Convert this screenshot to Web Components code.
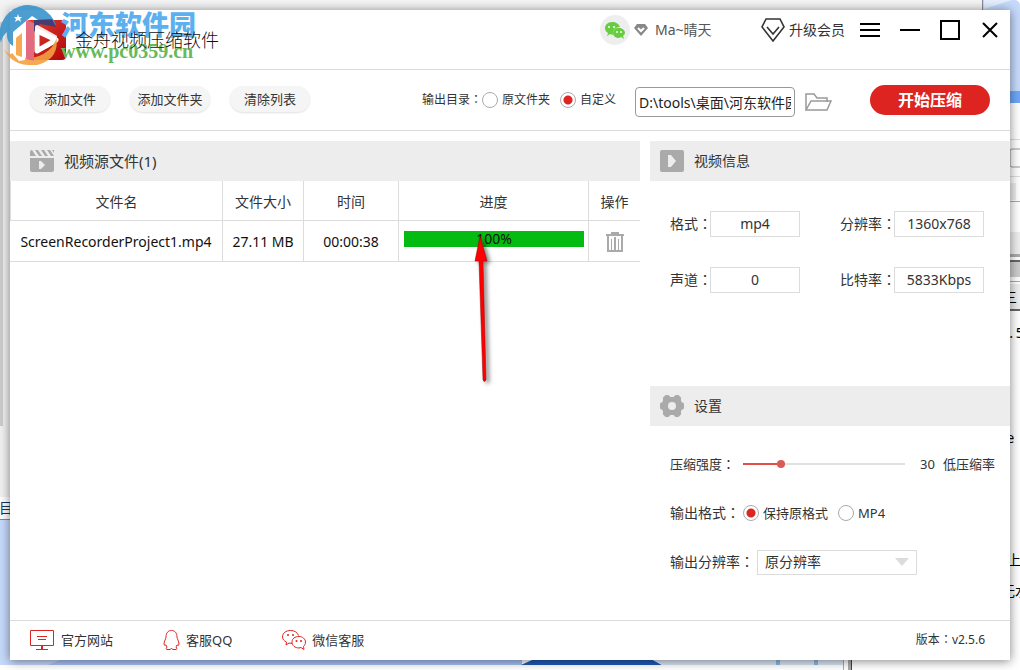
<!DOCTYPE html>
<html lang="zh-CN">
<head>
<meta charset="utf-8">
<meta name="viewport" content="width=device-width, initial-scale=1">
<title>金舟视频压缩软件</title>
<style>
  html {
    --line: #dcdcdc;
    --panel: #ededed;
    --text: #333;
    --red: #de2420;
    --icon: #aaa;
  }

  body {
    margin: 0;
    box-sizing: border-box;
    min-height: 100vh;
    padding: 10px;
    display: flex;
    position: relative;
    overflow: hidden;
    background: #fff;
    color: var(--text);
    font: 14px/20px "Noto Sans", "Noto Sans CJK SC", sans-serif;
  }
</style>
</head>
<body>
<desktop-backdrop></desktop-backdrop>
<app-window>
  <title-bar slot="title">金舟视频压缩软件</title-bar>
  <tool-bar slot="tools"></tool-bar>
  <file-list slot="main"></file-list>
  <video-info slot="side"></video-info>
  <compress-settings slot="side"></compress-settings>
  <app-footer slot="footer"></app-footer>
</app-window>

<script>
// clones the markup into an open shadow root
function define(name, html) {
  const template = document.createElement('template');
  template.innerHTML = html;

  window.customElements.define(name, class extends HTMLElement {
    constructor() {
      super();
      this.attachShadow({ mode: 'open' });
      this.shadowRoot.appendChild(template.content.cloneNode(true));
    }
  });
}

const controls = `
  * { box-sizing: border-box; }
  button, input, select { font: inherit; color: inherit; margin: 0; }
  button { padding: 0; border: 0; background: none; cursor: pointer; }
  svg { display: block; flex: none; }
  .colon {
    display: inline-block;
    width: 12px;
    line-height: 1;
    text-align: center;
    font-family: "Noto Sans CJK TC", sans-serif;
  }
`;

const radios = `
  .radio { display: flex; align-items: center; gap: 4px; white-space: nowrap; }
  .radio input {
    appearance: none;
    width: 16px;
    height: 16px;
    border: 1px solid #aaa;
    border-radius: 50%;
    background: #fff;
  }
  .radio input:checked {
    background: radial-gradient(circle, var(--red) 0 4px, #fff 5px);
  }
`;

// other windows that show round the edges
define('desktop-backdrop', `
  <style>
    :host { position: absolute; inset: 0; }
    svg { display: block; width: 100%; height: 100%; }
    text { font: 14px "Noto Sans Mono", "Noto Sans CJK SC", sans-serif; fill: #000; }
  </style>
  <svg viewBox="0 0 1020 670" preserveAspectRatio="none" aria-hidden="true">
    <path fill="#f4f4f4" d="M0 0h983v10H0z"/>
    <path fill="#f1f1f1" d="M0 5h10v492H0z"/>
    <path fill="#ccc" d="M0 22h3v404H0z"/>
    <path fill="#c6dafc" d="M0 520h10v145H0z"/>
    <path fill="#888" d="M0 519h10v1H0z"/>
    <text x="-1" y="513" style="fill:#14345c">目</text>
    <path fill="#a8c4f8" d="M0 660h522v5H0z"/>
    <path fill="#c6dafc" d="M0 660h60l-12 5H0z"/>
    <path fill="#205bb8" d="M532 660h121l9 5H521z"/>
    <path fill="#dce8f7" d="M653 660h190v5H662z"/>
    <path fill="#90b8e4" d="M776 660h4v5h-4zM814 660h4v5h-4z"/>
    <path fill="#aaa" d="M843 660h1v10h-1zM848 660h3v10h-3z"/>
    <path fill="#444" d="M851 660h1v10h-1z"/>
    <path fill="#c6dafc" d="M983 0h31q6 0 6 6v85h-37z"/>
    <path fill="#e4eeff" d="M984 0h28l-28 9z"/>
    <path fill="#889" d="M982 0h1v10h-1z"/>
    <path fill="#6ea7f9" d="M1010 91h10v12h-10z"/>
    <path fill="#ddd" d="M1010 139h10v1h-10zM1010 176h10v1h-10zM1010 252h10v1h-10z"/>
    <rect x="1010" y="149" width="20" height="18" rx="2" fill="#fff" stroke="#999"/>
    <path fill="#eee" d="M1010 183h6v17h-6zM1010 232h10v22h-10zM1010 284h10v25h-10z"/>
    <path fill="#aaa" d="M1010 201h10v1h-10zM1010 254h10v3h-10zM1010 281h10v1h-10z"/>
    <path fill="#666" d="M1010 260h10v2h-10zM1010 309h10v2h-10z"/>
    <path fill="#ccc" d="M1010 262h10v15h-10z"/>
    <text x="1003" y="302">三</text>
    <text x="1007" y="338">.5</text>
    <text x="1006" y="443">e</text>
    <text x="1007" y="565">上</text>
    <text x="1001" y="596">无水</text>
  </svg>
`);

define('app-window', `
  <style>
    :host {
      position: relative;
      flex: 1;
      min-width: 0;
      display: flex;
      flex-direction: column;
      background: #fff;
      box-shadow: 0 1px 10px rgba(0, 0, 0, 0.5);
    }
    .content {
      flex: 1;
      display: grid;
      grid-template-columns: minmax(0, 1fr) 360px;
      gap: 10px;
      padding-top: 10px;
    }
    .side { display: flex; flex-direction: column; }
  </style>
  <slot name="title"></slot>
  <slot name="tools"></slot>
  <div class="content">
    <slot name="main"></slot>
    <div class="side"><slot name="side"></slot></div>
  </div>
  <slot name="footer"></slot>
`);

define('site-watermark', `
  <style>
    :host { position: absolute; left: -10px; top: -5px; display: flex; pointer-events: none; }
    svg { flex: none; opacity: 0.9; }
    p { margin: 0; white-space: nowrap; }
    .name { font: 900 27px/30px "Noto Sans CJK SC", sans-serif; color: #5cb0ee; margin-top: 4px; }
    .url { font: bold 20px/22px "Liberation Serif", serif; color: #68b95a; margin-top: 1px; }
  </style>
  <svg width="61" height="60" viewBox="0 0 61 60" aria-hidden="true">
    <path fill="#3a94cc" d="M1 38A28 28 0 0 1 56 20L43 18 32 11 13 27v14q-7-4-6-14Q2 31 1 38z"/>
    <path fill="#f5a040" d="M4 44q5 7 9 4V32l7-6v26q16 4 29-7 7-6 7-16 5 25-19 31Q12 62 4 44z"/>
    <path fill="#fff" d="M13 49V29L25 18v37l-6 1z"/>
    <path fill="#f5a040" d="M16 50V33l6-5v24z"/>
    <path fill="#33417c" d="M34 15l18-1 4 8-16-3-6 8z"/>
    <path fill="#e5738a" d="M26 15l8 3v38l-8-2z"/>
    <path fill="none" stroke="#fff" stroke-width="4" stroke-linejoin="round" d="M37 22l18 10q-2 8-18 13z"/>
    <path fill="#fff" d="M18 9l1 3h3l-2 2 1 3-3-2-3 2 1-3-2-2h3z"/>
  </svg>
  <div>
    <p class="name">河东软件园</p>
    <p class="url">www.pc0359.cn</p>
  </div>
`);

define('title-bar', `
  <style>
    ${controls}
    :host {
      position: relative;
      display: flex;
      justify-content: space-between;
      height: 60px;
      box-sizing: border-box;
      padding: 0 10px 0 16px;
      border-bottom: 1px solid var(--line);
    }
    .brand, .right, .user, .vip { display: flex; align-items: center; }
    .brand { gap: 9px; }
    h1 { position: relative; z-index: 1; margin: 0; font-size: 18px; line-height: 24px; font-weight: 300; color: #111; }
    .right { height: 40px; }
    .user { gap: 4px; margin-right: 46px; color: #555; }
    .user span { padding-left: 3px; min-width: 63px; }
    .vip { gap: 4px; margin-right: 15px; }
    .window { display: flex; gap: 20px; color: #000; }
  </style>
  <div class="brand">
    <svg width="40" height="40" viewBox="0 0 40 40" aria-hidden="true">
      <defs><linearGradient id="g" x2="1" y2="1"><stop stop-color="#e43c34"/><stop offset="1" stop-color="#b00808"/></linearGradient></defs>
      <rect width="40" height="40" rx="4" fill="url(#g)"/>
      <path fill="none" stroke="#fff" stroke-width="5" stroke-linejoin="round" d="M11 11l19 9-19 11z"/>
    </svg>
    <h1><slot></slot></h1>
  </div>
  <div class="right">
    <div class="user">
      <svg width="30" height="30" viewBox="0 0 30 30" aria-hidden="true">
        <circle cx="15" cy="15" r="15" fill="#eee"/>
        <path fill="#66cc40" d="M12 7c-4 0-7 3-7 6 0 2 1 4 3 5l-1 3 3-2 3 1c-1-5 3-8 7-8-1-3-4-5-8-5z"/>
        <path fill="#66cc40" d="M19 13c-4 0-6 2-6 5s3 5 6 5l2-1 3 2-1-3c1-1 2-2 2-3 0-3-3-5-6-5z"/>
        <g fill="#fff"><circle cx="9" cy="12" r="1"/><circle cx="14" cy="12" r="1"/><circle cx="17" cy="17" r="1"/><circle cx="21" cy="17" r="1"/></g>
      </svg>
      <svg width="14" height="12" viewBox="0 0 14 12" aria-hidden="true">
        <path fill="#888" d="M3 0h8l3 4-7 8-7-8z"/>
        <path fill="none" stroke="#fff" stroke-width="2" d="M4 4l3 3 3-3"/>
      </svg>
      <span>Ma~晴天</span>
    </div>
    <button class="vip">
      <svg width="24" height="24" viewBox="0 0 24 24" fill="none" stroke="#333" stroke-width="1.6" aria-hidden="true">
        <path d="M5 1h14l4 8-11 14L1 9z"/><path d="M6 9l6 7 6-7"/>
      </svg>
      升级会员
    </button>
    <div class="window">
      <button aria-label="菜单"><svg width="20" height="20" viewBox="0 0 20 20"><path d="M0 3h20v2H0zM0 9h20v2H0zM0 15h20v2H0z"/></svg></button>
      <button aria-label="最小化"><svg width="20" height="20" viewBox="0 0 20 20"><path d="M0 9h20v2H0z"/></svg></button>
      <button aria-label="最大化"><svg width="20" height="20" viewBox="0 0 20 20"><path fill="none" stroke="#000" stroke-width="2" d="M1 1h18v18H1z"/></svg></button>
      <button aria-label="关闭"><svg width="20" height="20" viewBox="0 0 20 20"><path stroke="#000" stroke-width="2" d="M3 3l14 14M17 3L3 17"/></svg></button>
    </div>
  </div>
  <site-watermark></site-watermark>
`);

define('tool-bar', `
  <style>
    ${controls}
    ${radios}
    :host {
      display: flex;
      align-items: center;
      justify-content: space-between;
      height: 61px;
      box-sizing: border-box;
      padding: 0 20px;
      border-bottom: 1px solid var(--line);
      font-size: 12px;
    }
    .files { display: flex; gap: 20px; padding-bottom: 2px; }
    .files button {
      width: 80px;
      height: 26px;
      border-radius: 13px;
      background: #f5f5f5;
      box-shadow: 0 1px 2px rgba(0, 0, 0, 0.12);
      font-size: 13px;
    }
    .output { display: flex; align-items: center; }
    .radio { margin-right: 10px; }
    .path, .open { margin-top: 4px; }
    .path {
      width: 160px;
      height: 30px;
      margin-left: 9px;
      margin-right: 10px;
      padding: 0 3px;
      border: 1px solid #999;
      border-radius: 4px;
      background: #fff;
      color: #222;
      font-size: 14px;
    }
    .start {
      width: 120px;
      height: 30px;
      margin-left: 38px;
      border-radius: 15px;
      background: var(--red);
      color: #fff;
      font-size: 16px;
      font-weight: bold;
    }
  </style>
  <div class="files">
    <button>添加文件</button>
    <button>添加文件夹</button>
    <button>清除列表</button>
  </div>
  <div class="output" role="radiogroup" aria-label="输出目录">
    <span>输出目录<span class="colon">：</span></span>
    <label class="radio"><input type="radio" name="dir">原文件夹</label>
    <label class="radio"><input type="radio" name="dir" checked>自定义</label>
    <input class="path" type="text" aria-label="输出路径" value="D:\\tools\\桌面\\河东软件园">
    <button class="open" aria-label="打开文件夹">
      <svg width="27" height="20" viewBox="0 0 27 20" fill="none" stroke="#999" stroke-width="1.5">
        <path d="M1 18V2h8l3 4h10v4M1 18L6 9h20l-4 9z"/>
      </svg>
    </button>
    <button class="start">开始压缩</button>
  </div>
`);

define('panel-header', `
  <style>
    :host {
      display: flex;
      align-items: center;
      gap: 10px;
      height: 40px;
      box-sizing: border-box;
      padding: 0 10px;
      background: var(--panel);
    }
    h2 { margin: 0; font-size: inherit; font-weight: normal; }
  </style>
  <slot name="icon"></slot>
  <h2><slot></slot></h2>
`);

// red arrow that points at the finished bar
define('pointer-arrow', `
  <style>
    :host { position: absolute; left: 50%; top: 5px; margin-left: -24px; pointer-events: none; z-index: 1; }
    svg { display: block; filter: drop-shadow(3px 2px 2px rgba(0, 0, 0, 0.5)); }
  </style>
  <svg width="30" height="154" viewBox="0 0 30 154" aria-hidden="true">
    <path fill="#f00" stroke="#900" stroke-width="0.5" d="M10 0l7 25h-4l3 119q-2 3-3 0L9 25H5z"/>
  </svg>
`);

define('file-list', `
  <style>
    ${controls}
    :host { display: block; }
    panel-header { padding-left: 20px; font-size: 15px; }
    table { width: 100%; table-layout: fixed; border-collapse: separate; border-spacing: 0; }
    th, td {
      height: 40px;
      padding: 2px 0 0;
      border-right: 1px solid var(--line);
      border-bottom: 1px solid var(--line);
      text-align: center;
      font-weight: normal;
      white-space: nowrap;
    }
    td { color: #111; height: 41px; }
    th:first-child { border-left: 1px solid var(--line); }
    th:last-child, td:last-child { border-right: 0; }
    .size { width: 81px; }
    .time { width: 95px; }
    .progress { width: 190px; }
    .action { width: 51px; }
    td.progress { padding: 10px 4px 14px 5px; vertical-align: top; }
    .bar {
      position: relative;
      height: 16px;
      background: #04bb12;
      font-size: 14px;
      line-height: 16px;
    }
    td button { display: block; margin: 0 auto; }
  </style>
  <panel-header>
    <svg slot="icon" width="24" height="22" viewBox="0 0 24 22" fill="#aaa" aria-hidden="true">
      <path d="M0 2q0-2 2-2l4 6H0zM5 0h3l4 6H9zM11 0h3l4 6h-3zM17 0h3l4 6h-3zM22 0h2v3z"/>
      <path fill-rule="evenodd" d="M0 8h24v12q0 2-2 2H2q-2 0-2-2zM9 11v8h2l4-4-4-4z"/>
    </svg>
    视频源文件(1)
  </panel-header>
  <table>
    <thead>
      <tr>
        <th>文件名</th>
        <th class="size">文件大小</th>
        <th class="time">时间</th>
        <th class="progress">进度</th>
        <th class="action">操作</th>
      </tr>
    </thead>
    <tbody>
      <tr>
        <td>ScreenRecorderProject1.mp4</td>
        <td>27.11 MB</td>
        <td>00:00:38</td>
        <td class="progress"><div class="bar" role="progressbar" aria-valuenow="100">100%<pointer-arrow></pointer-arrow></div></td>
        <td>
          <button aria-label="删除">
            <svg width="18" height="20" viewBox="0 0 18 20" fill="#aaa">
              <path d="M5 0h8v2h5v2H0V2h5zM1 4h2v14h12V4h2v16H1z"/>
              <path d="M5 7h1v11H5zM8 5h2v13H8zM12 7h1v11h-1z"/>
            </svg>
          </button>
        </td>
      </tr>
    </tbody>
  </table>
`);

define('video-info', `
  <style>
    ${controls}
    :host { display: block; min-height: 245px; }
    dl {
      display: grid;
      grid-template-columns: 130px 144px;
      gap: 30px 40px;
      margin: 0;
      padding: 30px 20px;
    }
    dl div { display: flex; align-items: center; justify-content: space-between; }
    dt { white-space: nowrap; }
    dd {
      width: 90px;
      margin: 0;
      border: 1px solid var(--line);
      line-height: 24px;
      text-align: center;
    }
  </style>
  <panel-header>
    <svg slot="icon" width="24" height="22" viewBox="0 0 24 22" fill="#aaa" aria-hidden="true">
      <path fill-rule="evenodd" d="M2 0h20q2 0 2 2v18q0 2-2 2H2q-2 0-2-2V2q0-2 2-2zM8 5v12h3l5-6-5-6z"/>
    </svg>
    视频信息
  </panel-header>
  <dl>
    <div><dt>格式<span class="colon">：</span></dt><dd>mp4</dd></div>
    <div><dt>分辨率<span class="colon">：</span></dt><dd>1360x768</dd></div>
    <div><dt>声道<span class="colon">：</span></dt><dd>0</dd></div>
    <div><dt>比特率<span class="colon">：</span></dt><dd>5833Kbps</dd></div>
  </dl>
`);

define('compress-settings', `
  <style>
    ${controls}
    ${radios}
    :host { display: block; }
    .rows { display: grid; gap: 23px; padding: 25px 15px 0 20px; }
    .row { display: flex; align-items: center; min-height: 26px; white-space: nowrap; }
    .strength, .radio { font-size: 13px; }
    .range {
      appearance: none;
      flex: 1;
      min-width: 0;
      height: 8px;
      margin: 0 15px 0 9px;
      background: linear-gradient(to right, #e05048 22%, #e0e0e0 22%) center / 100% 2px no-repeat;
    }
    .range::-webkit-slider-thumb {
      appearance: none;
      width: 8px;
      height: 8px;
      border-radius: 50%;
      background: #d95b55;
    }
    output { margin-right: 8px; }
    .formats { display: flex; gap: 10px; margin-left: 5px; }
    .select { position: relative; display: flex; margin-left: 5px; }
    .select svg { position: absolute; right: 8px; top: 8px; pointer-events: none; }
    select {
      appearance: none;
      width: 160px;
      height: 25px;
      padding: 0 7px;
      border: 1px solid var(--line);
      border-radius: 0;
      background: #fff;
    }
  </style>
  <panel-header>
    <svg slot="icon" width="24" height="22" viewBox="0 0 24 22" aria-hidden="true">
      <path fill="#aaa" stroke="#aaa" stroke-width="2" stroke-linejoin="round" fill-rule="evenodd" d="M6 1h2l2 2h4l2-2h2l2 2v3l1 2 2 1v4l-2 1-1 2v3l-2 2h-2l-2-2h-4l-2 2H6l-2-2v-3l-1-2-2-1V9l2-1 1-2V3zM12 6a5 5 0 1 0 0 10 5 5 0 0 0 0-10z"/>
    </svg>
    设置
  </panel-header>
  <div class="rows">
    <div class="row strength">
      <label for="strength">压缩强度<span class="colon">：</span></label>
      <input class="range" id="strength" type="range" min="10" max="100" value="30">
      <output for="strength">30</output>
      <span>低压缩率</span>
    </div>
    <div class="row" role="radiogroup" aria-label="输出格式">
      <span>输出格式<span class="colon">：</span></span>
      <div class="formats">
        <label class="radio"><input type="radio" name="format" checked>保持原格式</label>
        <label class="radio"><input type="radio" name="format">MP4</label>
      </div>
    </div>
    <div class="row">
      <label for="resolution">输出分辨率<span class="colon">：</span></label>
      <div class="select">
        <select id="resolution"><option>原分辨率</option></select>
        <svg width="14" height="8" viewBox="0 0 14 8" fill="#dcdcdc" aria-hidden="true"><path d="M0 0h14L7 8z"/></svg>
      </div>
    </div>
  </div>
`);

define('app-footer', `
  <style>
    ${controls}
    :host {
      display: flex;
      align-items: center;
      justify-content: space-between;
      height: 40px;
      box-sizing: border-box;
      padding: 0 25px 2px 20px;
      border-top: 1px solid var(--line);
      font-size: 13px;
    }
    nav { display: flex; gap: 50px; }
    a { display: flex; align-items: center; gap: 6px; color: inherit; text-decoration: none; }
    svg { fill: none; stroke: var(--red); }
    .version { font-size: 12px; }
  </style>
  <nav>
    <a href="#site">
      <svg width="25" height="20" viewBox="0 0 25 20" aria-hidden="true">
        <path d="M.5.5h23v15H.5zM7 6.500h10M8 9.500h8M6 19.500h12"/><path stroke-width="2" d="M12 16v3"/>
      </svg>
      官方网站
    </a>
    <a href="#qq">
      <svg width="17" height="20" viewBox="0 0 17 20" aria-hidden="true">
        <path d="M3 7c0-4 2-6.500 5.500-6.500S14 3 14 7c0 2 2 4 2 7q0 2-2 1l-1 2q2 2 0 2.500H10l-1.500-1-1.500 1H4Q2 19 4 17l-1-2q-2 1-2-1c0-3 2-5 2-7z"/>
      </svg>
      客服QQ
    </a>
    <a href="#wechat">
      <svg width="24" height="20" viewBox="0 0 24 20" aria-hidden="true">
        <path d="M10 13.500l-3-.5-3 2 .5-3C2 11 .5 9 .5 7 .5 3 4 .5 8.500.5c4 0 7 2 8 5"/>
        <path d="M17 6.500c-4 0-7 2-7 5.500s3 6 7 6l2-.5 3 2-.5-3c1-1 2-2.500 2-4.500 0-3-3-5.500-6.500-5.500z"/>
        <g fill="#de2420" stroke="none"><circle cx="6" cy="5" r="1"/><circle cx="11" cy="5" r="1"/><circle cx="14.500" cy="11" r="1"/><circle cx="19" cy="11" r="1"/></g>
      </svg>
      微信客服
    </a>
  </nav>
  <span class="version">版本<span class="colon">：</span>v2.5.6</span>
`);
</script>
</body>
</html>
